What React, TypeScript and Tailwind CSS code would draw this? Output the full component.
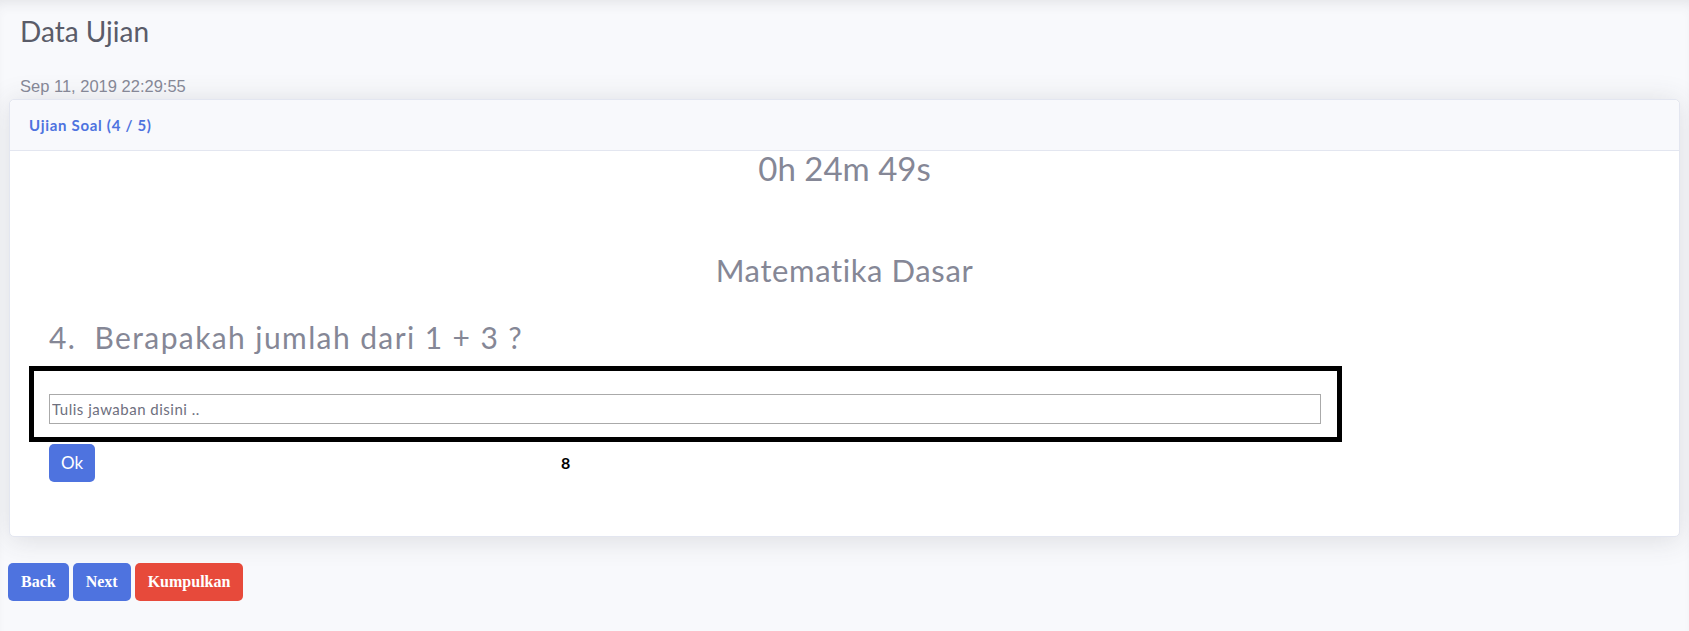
import { useState } from 'react';

export default function App() {
  const [answer, setAnswer] = useState('');

  return (
    <div className="min-h-screen bg-[#f8f9fc] font-['Lato',sans-serif] shadow-[inset_0_10px_14px_-8px_rgba(58,59,69,0.12)]">
      <div className="pt-[14px] pl-[20px]">
        <h3 className="text-[28px] leading-[34px] text-[#5a5c69]">Data Ujian</h3>
        <p className="mt-[28px] font-['Liberation_Sans',sans-serif] text-[16.5px] leading-[20px] text-[#858796]">
          Sep 11, 2019 22:29:55
        </p>
      </div>

      <div className="mx-[9px] mt-[3px] rounded-[5px] border border-[#e3e6f0] bg-white shadow-[0_0.15rem_1.75rem_0_rgba(58,59,69,0.15)]">
        <div className="flex h-[51px] items-center rounded-t-[5px] border-b border-[#e3e6f0] bg-[#f8f9fc] px-[19px]">
          <h6 className="text-[15px] font-bold tracking-[0.7px] text-[#4e73df]">Ujian Soal (4 / 5)</h6>
        </div>

        <div className="pb-[54px] text-[#858796]">
          <div className="text-center text-[33px] leading-[34px]">0h 24m 49s</div>
          <div className="mt-[67px] text-center text-[31px] leading-[36px] tracking-[0.6px]">Matematika Dasar</div>
          <div className="mt-[31px] pl-[39px] text-[30px] leading-[36px] tracking-[1.4px]">4.&nbsp; Berapakah jumlah dari 1 + 3 ?</div>

          <div className="ml-[19px] mt-[11px] w-[1313px] border-[5px] border-black pt-[23px] pb-[13px] pl-[15px]">
            <input
              value={answer}
              onChange={(e) => setAnswer(e.target.value)}
              placeholder="Tulis jawaban disini .."
              className="h-[30px] w-[1272px] border border-[#aaaaaa] px-[2px] text-[15px] tracking-[0.5px] text-[#6e707e] placeholder:text-[#6e707e] outline-none"
            />
          </div>

          <div className="mt-[2px] flex items-center pl-[39px]">
            <button className="h-[38px] w-[46px] rounded-[5px] bg-[#4e73df] text-[17px] text-white">Ok</button>
            <span className="ml-[466px] text-[16px] font-bold text-black">8</span>
          </div>
        </div>
      </div>

      <div className="mt-[26px] flex gap-[4px] pl-[8px] font-['Liberation_Serif',serif] text-[16px] font-bold text-white">
        <button className="h-[38px] rounded-[5px] bg-[#4e73df] px-[13px]">Back</button>
        <button className="h-[38px] rounded-[5px] bg-[#4e73df] px-[13px]">Next</button>
        <button className="h-[38px] rounded-[5px] bg-[#e74a3b] px-[13px]">Kumpulkan</button>
      </div>
    </div>
  );
}
